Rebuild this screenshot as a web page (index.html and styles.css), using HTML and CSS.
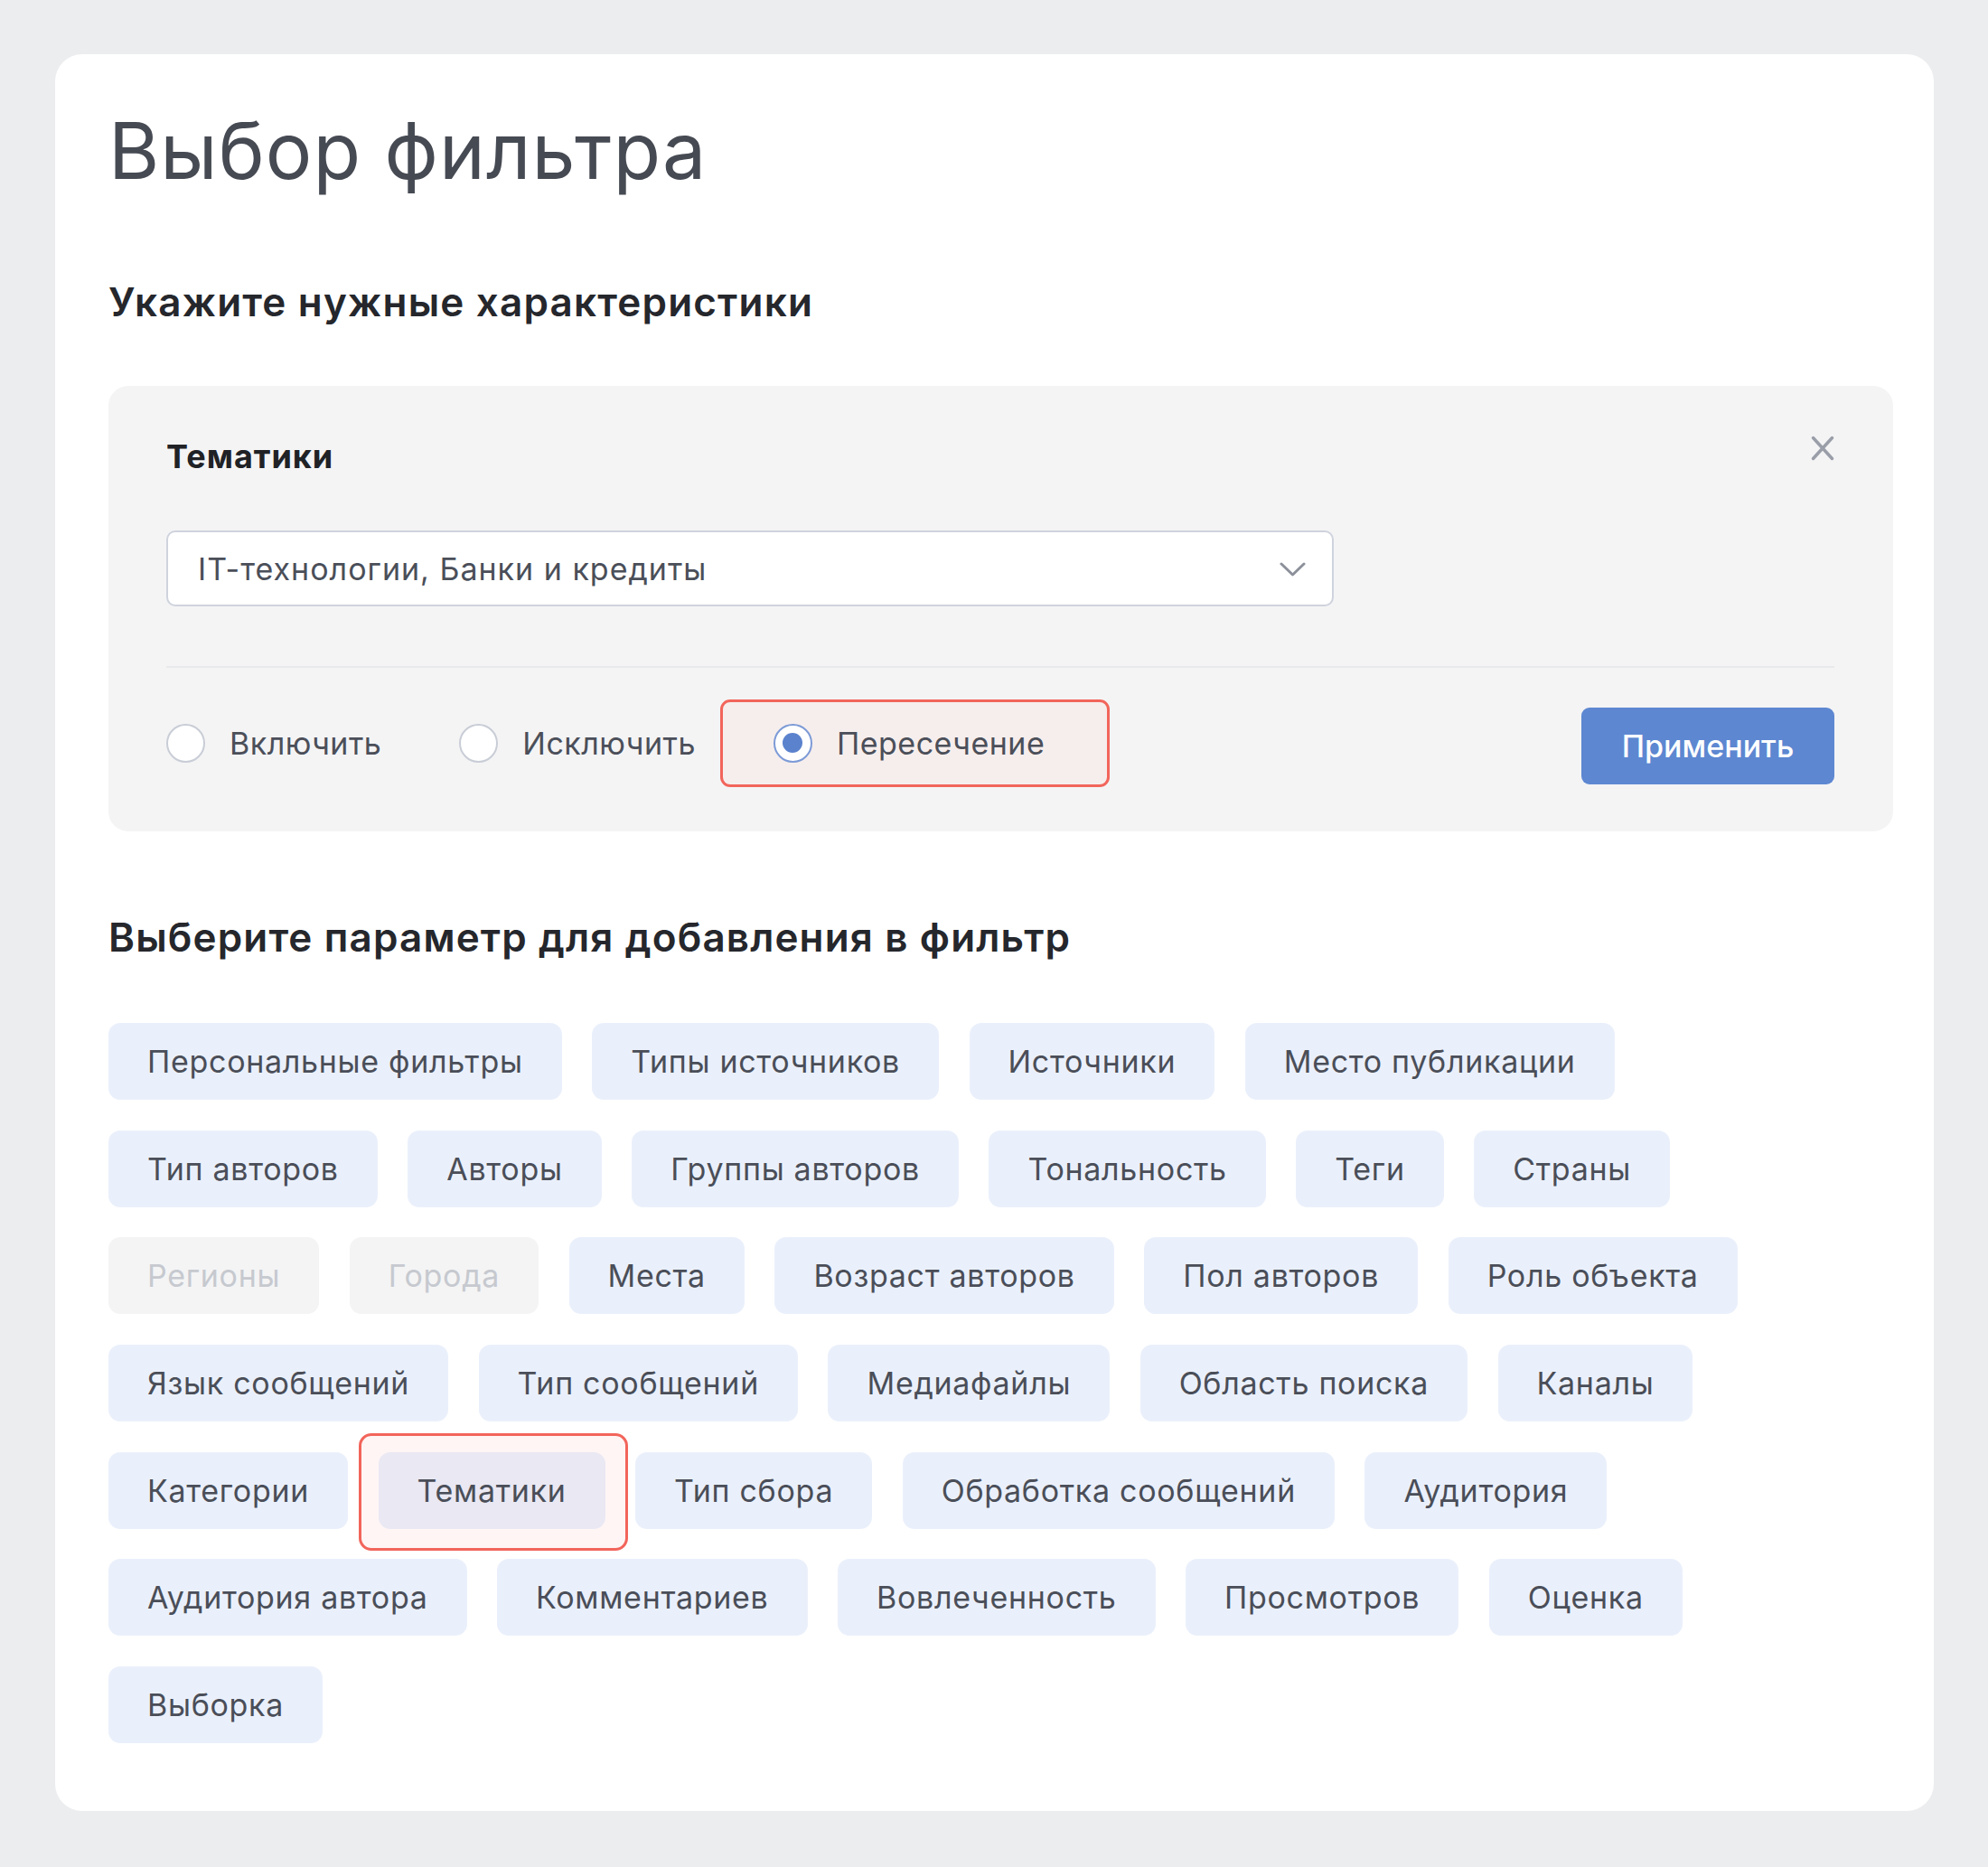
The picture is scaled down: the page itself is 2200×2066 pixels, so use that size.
FILE: index.html
```html
<!DOCTYPE html>
<html lang="ru">
<head>
<meta charset="utf-8">
<title>Выбор фильтра</title>
<link rel="stylesheet" href="styles.css">
</head>
<body>
<div class="page">
  <div class="card">
    <h1 class="title">Выбор фильтра</h1>
    <h2 class="subtitle">Укажите нужные характеристики</h2>

    <div class="panel">
      <div class="panel-label">Тематики</div>
      <button class="close" type="button" aria-label="Закрыть">
        <svg width="26" height="28" viewBox="0 0 26 28"><path d="M2.5 2.5 L23.5 25.5 M23.5 2.5 L2.5 25.5" stroke="#9a9ea8" stroke-width="3.5" stroke-linecap="round" fill="none"/></svg>
      </button>
      <div class="select">
        <span class="select-value">IT-технологии, Банки и кредиты</span>
        <svg class="chevron" width="29" height="16" viewBox="0 0 29 16"><path d="M2 2 L14.5 14 L27 2" stroke="#8c909a" stroke-width="3" fill="none" stroke-linecap="round" stroke-linejoin="round"/></svg>
      </div>
      <div class="divider"></div>
      <div class="panel-footer">
        <div class="radios">
          <label class="radio"><span class="circle"></span><span>Включить</span></label>
          <label class="radio"><span class="circle"></span><span>Исключить</span></label>
          <label class="radio radio-active"><span class="circle circle-on"></span><span>Пересечение</span></label>
        </div>
        <button class="apply" type="button">Применить</button>
      </div>
    </div>

    <h2 class="section">Выберите параметр для добавления в фильтр</h2>
    <div class="chips">
      <div class="chip-row">
        <span class="chip">Персональные фильтры</span>
        <span class="chip">Типы источников</span>
        <span class="chip">Источники</span>
        <span class="chip">Место публикации</span>
      </div>
      <div class="chip-row">
        <span class="chip">Тип авторов</span>
        <span class="chip">Авторы</span>
        <span class="chip">Группы авторов</span>
        <span class="chip">Тональность</span>
        <span class="chip">Теги</span>
        <span class="chip">Страны</span>
      </div>
      <div class="chip-row">
        <span class="chip chip-disabled">Регионы</span>
        <span class="chip chip-disabled">Города</span>
        <span class="chip">Места</span>
        <span class="chip">Возраст авторов</span>
        <span class="chip">Пол авторов</span>
        <span class="chip">Роль объекта</span>
      </div>
      <div class="chip-row">
        <span class="chip">Язык сообщений</span>
        <span class="chip">Тип сообщений</span>
        <span class="chip">Медиафайлы</span>
        <span class="chip">Область поиска</span>
        <span class="chip">Каналы</span>
      </div>
      <div class="chip-row">
        <span class="chip">Категории</span>
        <span class="chip chip-active">Тематики</span>
        <span class="chip">Тип сбора</span>
        <span class="chip">Обработка сообщений</span>
        <span class="chip">Аудитория</span>
      </div>
      <div class="chip-row">
        <span class="chip">Аудитория автора</span>
        <span class="chip">Комментариев</span>
        <span class="chip">Вовлеченность</span>
        <span class="chip">Просмотров</span>
        <span class="chip">Оценка</span>
      </div>
      <div class="chip-row">
        <span class="chip">Выборка</span>
      </div>
    </div>
  </div>
</div>
</body>
</html>
```

FILE: styles.css
```css
* { box-sizing: border-box; }

html, body {
  margin: 0;
  padding: 0;
  background: #ecedef;
}

body {
  font-family: Inter, "Noto Sans", "Liberation Sans", sans-serif;
  color: #4a4e58;
}

.page {
  padding: 60px 60px 61px 61px;
}

.card {
  background: #ffffff;
  border-radius: 30px;
  padding: 64px 45px 75px 59px;
  isolation: isolate;
}

.title {
  margin: 0;
  font-size: 86px;
  line-height: 86px;
  font-weight: 400;
  color: #464a53;
  letter-spacing: 1.1px;
}

.subtitle {
  margin: 102px 0 0;
  font-size: 44px;
  line-height: 44px;
  font-weight: 600;
  color: #25272c;
  letter-spacing: 1.2px;
}

.panel {
  position: relative;
  margin-top: 71px;
  background: #f4f4f5;
  border-radius: 22px;
  padding: 60px 65px 52px 64px;
  isolation: isolate;
}

.panel-label {
  font-size: 36px;
  line-height: 36px;
  font-weight: 700;
  color: #202226;
  letter-spacing: 1px;
}

.close {
  position: absolute;
  top: 55px;
  right: 65px;
  width: 26px;
  height: 28px;
  padding: 0;
  border: 0;
  background: transparent;
  display: flex;
}

.select {
  margin-top: 64px;
  width: 1292px;
  height: 84px;
  background: #ffffff;
  border: 2px solid #cfd3dd;
  border-radius: 10px;
  display: flex;
  align-items: center;
  justify-content: space-between;
  padding: 0 29px 0 33px;
}

.select-value {
  font-size: 34px;
  color: #4b4f59;
  letter-spacing: 1px;
}

.chevron { margin-top: 2px; }

.divider {
  margin-top: 66px;
  height: 2px;
  background: #e8e9ec;
}

.panel-footer {
  margin-top: 44px;
  display: flex;
  align-items: center;
  justify-content: space-between;
}

.radios {
  display: flex;
  align-items: center;
  gap: 86px;
  margin-bottom: 7px;
}

.radio {
  position: relative;
  display: flex;
  align-items: center;
  gap: 27px;
  font-size: 34px;
  line-height: 43px;
  color: #4b4f59;
  letter-spacing: 0.5px;
}

.radio-active::before {
  content: "";
  position: absolute;
  top: -27px;
  bottom: -27px;
  left: -59px;
  right: -72px;
  border: 3px solid #f2655b;
  border-radius: 11px;
  background: #f6eeed;
  z-index: -1;
}

.circle {
  width: 43px;
  height: 43px;
  border-radius: 50%;
  border: 2px solid #c9cdd6;
  background: #ffffff;
  display: flex;
  align-items: center;
  justify-content: center;
  flex: none;
}

.circle-on {
  border-color: #7d9bd7;
}

.circle-on::after {
  content: "";
  width: 22px;
  height: 22px;
  border-radius: 50%;
  background: #5b82cd;
}

.apply {
  width: 280px;
  height: 85px;
  border: 0;
  border-radius: 9px;
  background: #5d87d1;
  color: #ffffff;
  font-family: inherit;
  font-size: 34px;
  font-weight: 500;
  padding: 0;
}

.section {
  margin: 95px 0 0;
  font-size: 44px;
  line-height: 44px;
  font-weight: 600;
  color: #25272c;
  letter-spacing: 1.15px;
}

.chips {
  margin-top: 73px;
  display: flex;
  flex-direction: column;
  gap: 33.7px;
}

.chip-row {
  display: flex;
  gap: 33.5px;
}

.chip {
  position: relative;
  height: 85px;
  padding: 0 43px;
  display: flex;
  align-items: center;
  background: #eaf0fb;
  border-radius: 13px;
  font-size: 34px;
  color: #4a4e58;
  white-space: nowrap;
  letter-spacing: 0.7px;
}

.chip-disabled {
  background: #f4f4f5;
  color: #c6c9cf;
}

.chip-active {
  background: #e9e8f3;
}

.chip-active::before {
  content: "";
  position: absolute;
  top: -21px;
  bottom: -24px;
  left: -22px;
  right: -25px;
  border: 3px solid #f2655b;
  border-radius: 14px;
  background: #fff5f5;
  z-index: -1;
}
```
